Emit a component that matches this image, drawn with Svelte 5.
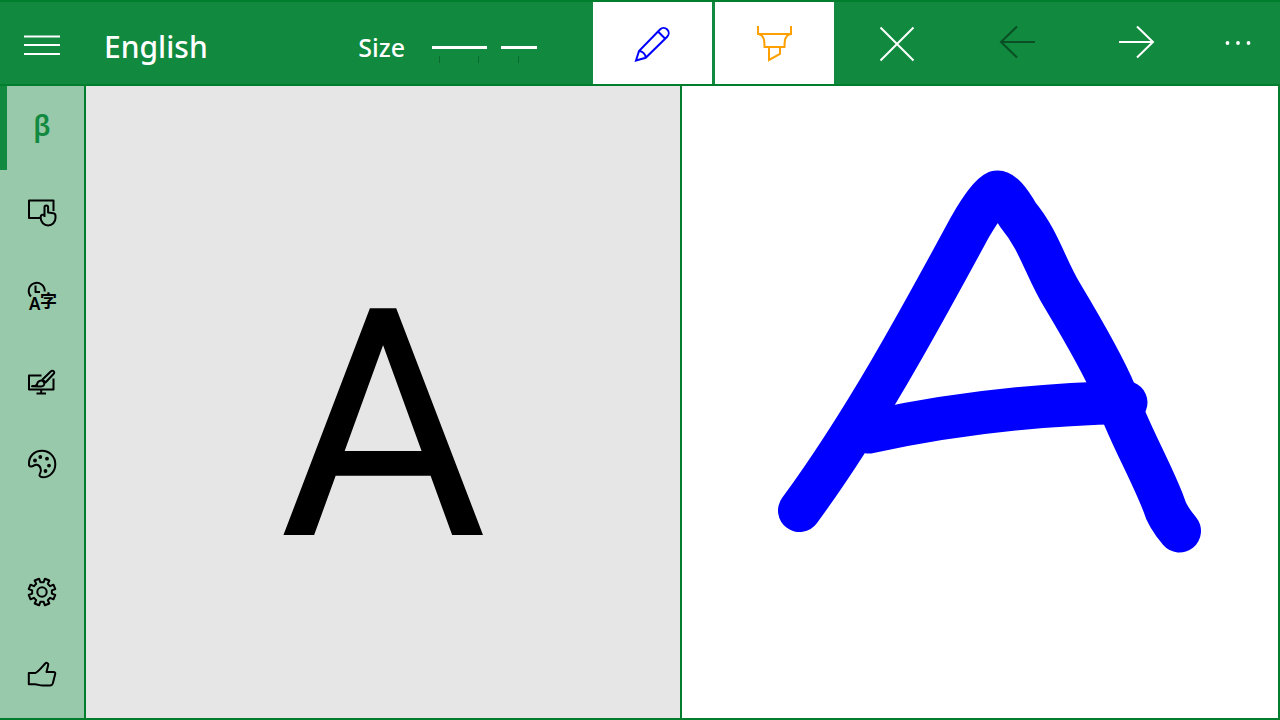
<script>
  const count = 8;
  const point = (radius, degrees) => {
    const a = (degrees * Math.PI) / 180;
    return `${(16 + radius * Math.sin(a)).toFixed(2)} ${(16 - radius * Math.cos(a)).toFixed(2)}`;
  };
  // Outline of the settings cog, one tooth per step.
  const gear =
    'M' +
    Array.from({ length: count }, (_, i) => {
      const c = (i + 0.5) * (360 / count);
      return [point(10, c - 13), point(13.6, c - 10), point(13.6, c + 10), point(10, c + 13)].join('L');
    }).join('L') +
    'Z';

  let size = $state(60);
  let page = $state('letters');
</script>

<div class="app">
  <header>
    <button class="menu" aria-label="Menu">
      <svg width="36" height="22" viewBox="0 0 36 22"><path d="M0 2.5H36M0 11H36M0 20H36" /></svg>
    </button>
    <h1>English</h1>
    <div class="size">
      <label for="size">Size</label>
      <input id="size" type="range" min="0" max="100" bind:value={size} />
    </div>
    <button class="tool pen" aria-label="Pen">
      <svg width="40" height="40" viewBox="0 0 40 40">
        <path d="M3 37.500 6 28 27 6.500a4.900 4.900 0 0 1 7.200 7.200L12.700 34.800ZM25 8.500l7.200 7.200M6 28a7 7 0 0 1 6.700 6.800" />
      </svg>
    </button>
    <button class="tool marker" aria-label="Highlighter">
      <svg width="40" height="40" viewBox="0 0 40 40">
        <path d="M3 3V11H36V3M4 11C9 13 9.500 17 9.500 24H29.500C29.500 17 30 13 35 11M14 24V37L25 31V24" />
      </svg>
    </button>
    <button class="action" aria-label="Clear">
      <svg width="40" height="40" viewBox="0 0 40 40"><path d="M3.500 4.500 36.500 37.500M36.500 4.500 3.500 37.500" /></svg>
    </button>
    <button class="action" aria-label="Previous" disabled>
      <svg width="40" height="40" viewBox="0 0 40 40"><path d="M38 19H4M20 3.500 4 19 20 34.500" /></svg>
    </button>
    <button class="action" aria-label="Next">
      <svg width="40" height="40" viewBox="0 0 40 40"><path d="M2 19H36M20 3.500 36 19 20 34.500" /></svg>
    </button>
    <button class="more" aria-label="More">
      <svg width="40" height="40" viewBox="0 0 40 40">
        <circle cx="8.500" cy="20" r="1.900" /><circle cx="19" cy="20" r="1.900" /><circle cx="29.500" cy="20" r="1.900" />
      </svg>
    </button>
  </header>

  <nav aria-label="Sections">
    <button class:current={page === 'letters'} aria-label="Letters" onclick={() => (page = 'letters')}>
      <span class="beta">β</span>
    </button>
    <button class:current={page === 'touch'} aria-label="Touch" onclick={() => (page = 'touch')}>
      <svg width="32" height="32" viewBox="0 0 32 32">
        <path d="M14 22H3V4.500H27.500V15" />
        <path d="M18.500 21V11.300a1.800 1.800 0 0 1 3.600 0V16.500L27.500 17.300Q29.500 17.800 29.500 20V22a7.400 7.400 0 0 1-14.800 0V20.500Q14.800 18.500 18.500 18.500" />
      </svg>
    </button>
    <button class:current={page === 'recent'} aria-label="Recent languages" onclick={() => (page = 'recent')}>
      <svg width="32" height="32" viewBox="0 0 32 32">
        <path d="M5 16.500A8 8 0 1 1 18.700 11.500M9.500 5.500V12H14" />
        <text class="latin" x="3" y="30">A</text>
        <text class="han" x="14" y="27">字</text>
      </svg>
    </button>
    <button class:current={page === 'board'} aria-label="Board" onclick={() => (page = 'board')}>
      <svg width="32" height="32" viewBox="0 0 32 32">
        <path d="M15.500 11.500H3V25.500H27.500V14.500M15.200 25.500V29.500M10.500 29.500H20" />
        <path d="M16.500 15.500 25 7.200a1.800 1.800 0 0 1 2.700 2.600L19.500 18.500Z" />
        <path d="M6 22.300C9 22.500 11 21.500 11.300 19.500A3.600 3.600 0 0 1 18 18.500C19 21 17.500 22.500 15 22.500Z" />
      </svg>
    </button>
    <button class:current={page === 'colours'} aria-label="Colours" onclick={() => (page = 'colours')}>
      <svg width="32" height="32" viewBox="0 0 32 32">
        <path d="M3 16.500C2.500 8 8.500 2.800 16 2.800A13.200 13.200 0 0 1 29.300 16C29.300 24 23.500 29.300 17 29.300C13.500 29.300 12.800 27.300 14 25.500C16 22.500 14.500 17.500 11 16.800C8 16.300 7.500 18.800 5 18.500C3.500 18.300 3 17.500 3 16.500Z" />
        <g class="dots">
          <circle cx="9" cy="12.500" r="1.900" /><circle cx="14.300" cy="9" r="1.900" /><circle cx="21" cy="10.700" r="1.900" />
          <circle cx="23" cy="17.600" r="1.900" /><circle cx="19.500" cy="23" r="1.900" />
        </g>
      </svg>
    </button>
    <button class="bottom" class:current={page === 'settings'} aria-label="Settings" onclick={() => (page = 'settings')}>
      <svg width="32" height="32" viewBox="0 0 32 32"><path d={gear} /><circle cx="16" cy="16" r="4.700" /></svg>
    </button>
    <button class:current={page === 'rate'} aria-label="Rate" onclick={() => (page = 'rate')}>
      <svg width="32" height="32" viewBox="0 0 32 32">
        <path d="M2.800 13H9.500C13 11 16 7 19.200 3.500C20.500 2 22.700 3.200 22.200 5L20.500 12H27.500C29 12 29.500 12.800 29.200 14L26.800 23.500Q26 25.600 24 25.600H17C13 25.600 12 24.300 9 24.300H2.800Z" />
      </svg>
    </button>
  </nav>

  <main>
    <section class="sample" aria-label="Letter">A</section>
    <section class="ink" aria-label="Handwriting">
      <svg viewBox="682 86 596 632" role="img" aria-label="Drawn strokes">
        <path d="M799.500 510.500C863 424 917 325 970 227Q988 196 997 192Q1004 191 1018 215C1039 240 1046 269 1062 295C1083 330 1103 364 1115 393C1127 430 1150 468 1164 505Q1167 516 1179.500 531" />
        <path d="M869 432Q993 405 1126 402.500" />
      </svg>
    </section>
  </main>
</div>

<style>
  :global(body) {
    margin: 0;
  }
  .app {
    display: grid;
    grid-template: 86px 1fr / 86px 1fr;
    min-height: 100vh;
    box-sizing: border-box;
    border: solid #007e2d;
    border-width: 0 2px 2px 0;
    background: #98c9ab;
    font-family: 'Noto Sans', sans-serif;
  }
  header {
    grid-column: 1 / -1;
    display: flex;
    align-items: stretch;
    box-sizing: border-box;
    margin-right: -2px;
    background: #11893e;
    border-top: 2px solid #007e2d;
    border-bottom: 2px solid #007e2d;
    color: #fff;
  }
  button {
    display: flex;
    align-items: center;
    justify-content: center;
    padding: 0;
    border: 0;
    background: none;
    color: inherit;
    font: inherit;
  }
  svg {
    fill: none;
    stroke: currentColor;
    stroke-width: 2;
  }
  .menu {
    width: 84px;
    padding-top: 4px;
  }
  h1 {
    flex: 1;
    align-self: center;
    margin: 0;
    padding: 8px 20px 0;
    font-size: 30px;
    font-weight: 500;
    line-height: 40px;
  }
  .size {
    display: flex;
    align-items: center;
    gap: 27px;
    padding: 4px 56px 0 0;
    font-size: 25px;
    font-weight: 500;
    line-height: 36px;
  }
  label {
    padding-top: 4px;
  }
  input {
    appearance: none;
    width: 105px;
    height: 36px;
    margin: 4px 0 0;
    background:
      linear-gradient(#0b6b2f, #0b6b2f) 7px 27px / 1px 7px no-repeat,
      linear-gradient(#0b6b2f, #0b6b2f) 46px 27px / 1px 7px no-repeat,
      linear-gradient(#0b6b2f, #0b6b2f) 86px 27px / 1px 7px no-repeat;
  }
  input::-webkit-slider-runnable-track {
    height: 3px;
    background: #fff;
  }
  input::-webkit-slider-thumb {
    appearance: none;
    width: 14px;
    height: 3px;
    background: #11893e;
  }
  .tool {
    width: 119px;
    margin-right: 3px;
    background: #fff;
  }
  .pen {
    color: #00f;
  }
  .marker {
    color: #ffa000;
  }
  .action {
    width: 120px;
  }
  .action:disabled {
    color: #0a4f24;
  }
  .more {
    width: 83px;
  }
  .more svg,
  .dots {
    fill: currentColor;
    stroke: none;
  }
  nav {
    display: flex;
    flex-direction: column;
    border-right: 2px solid #007e2d;
    color: #000;
  }
  nav button {
    height: 84px;
    box-sizing: border-box;
  }
  nav svg {
    overflow: visible;
    stroke-linejoin: round;
  }
  .current {
    padding-right: 7px;
    border-left: 7px solid #11893e;
    color: #11893e;
  }
  .beta {
    padding-bottom: 6px;
    font-size: 28px;
    font-weight: 600;
    line-height: 28px;
  }
  .bottom {
    margin-top: auto;
  }
  text {
    fill: currentColor;
    stroke: none;
  }
  .latin {
    font-size: 17px;
    font-weight: 600;
  }
  .han {
    font-family: 'Noto Sans CJK SC', sans-serif;
    font-size: 17px;
    font-weight: 700;
  }
  main {
    display: grid;
    grid-template-columns: 1fr 1fr;
  }
  .sample {
    display: flex;
    align-items: center;
    justify-content: center;
    padding-top: 48px;
    border-right: 2px solid #007e2d;
    background: #e6e6e6;
    font-family: Roboto, sans-serif;
    font-size: 319px;
    line-height: 432px;
  }
  .ink {
    display: flex;
    background: #fff;
    color: #00f;
  }
  .ink svg {
    flex: 1;
    min-width: 0;
    stroke-width: 43;
    stroke-linecap: round;
    stroke-linejoin: round;
  }
</style>
